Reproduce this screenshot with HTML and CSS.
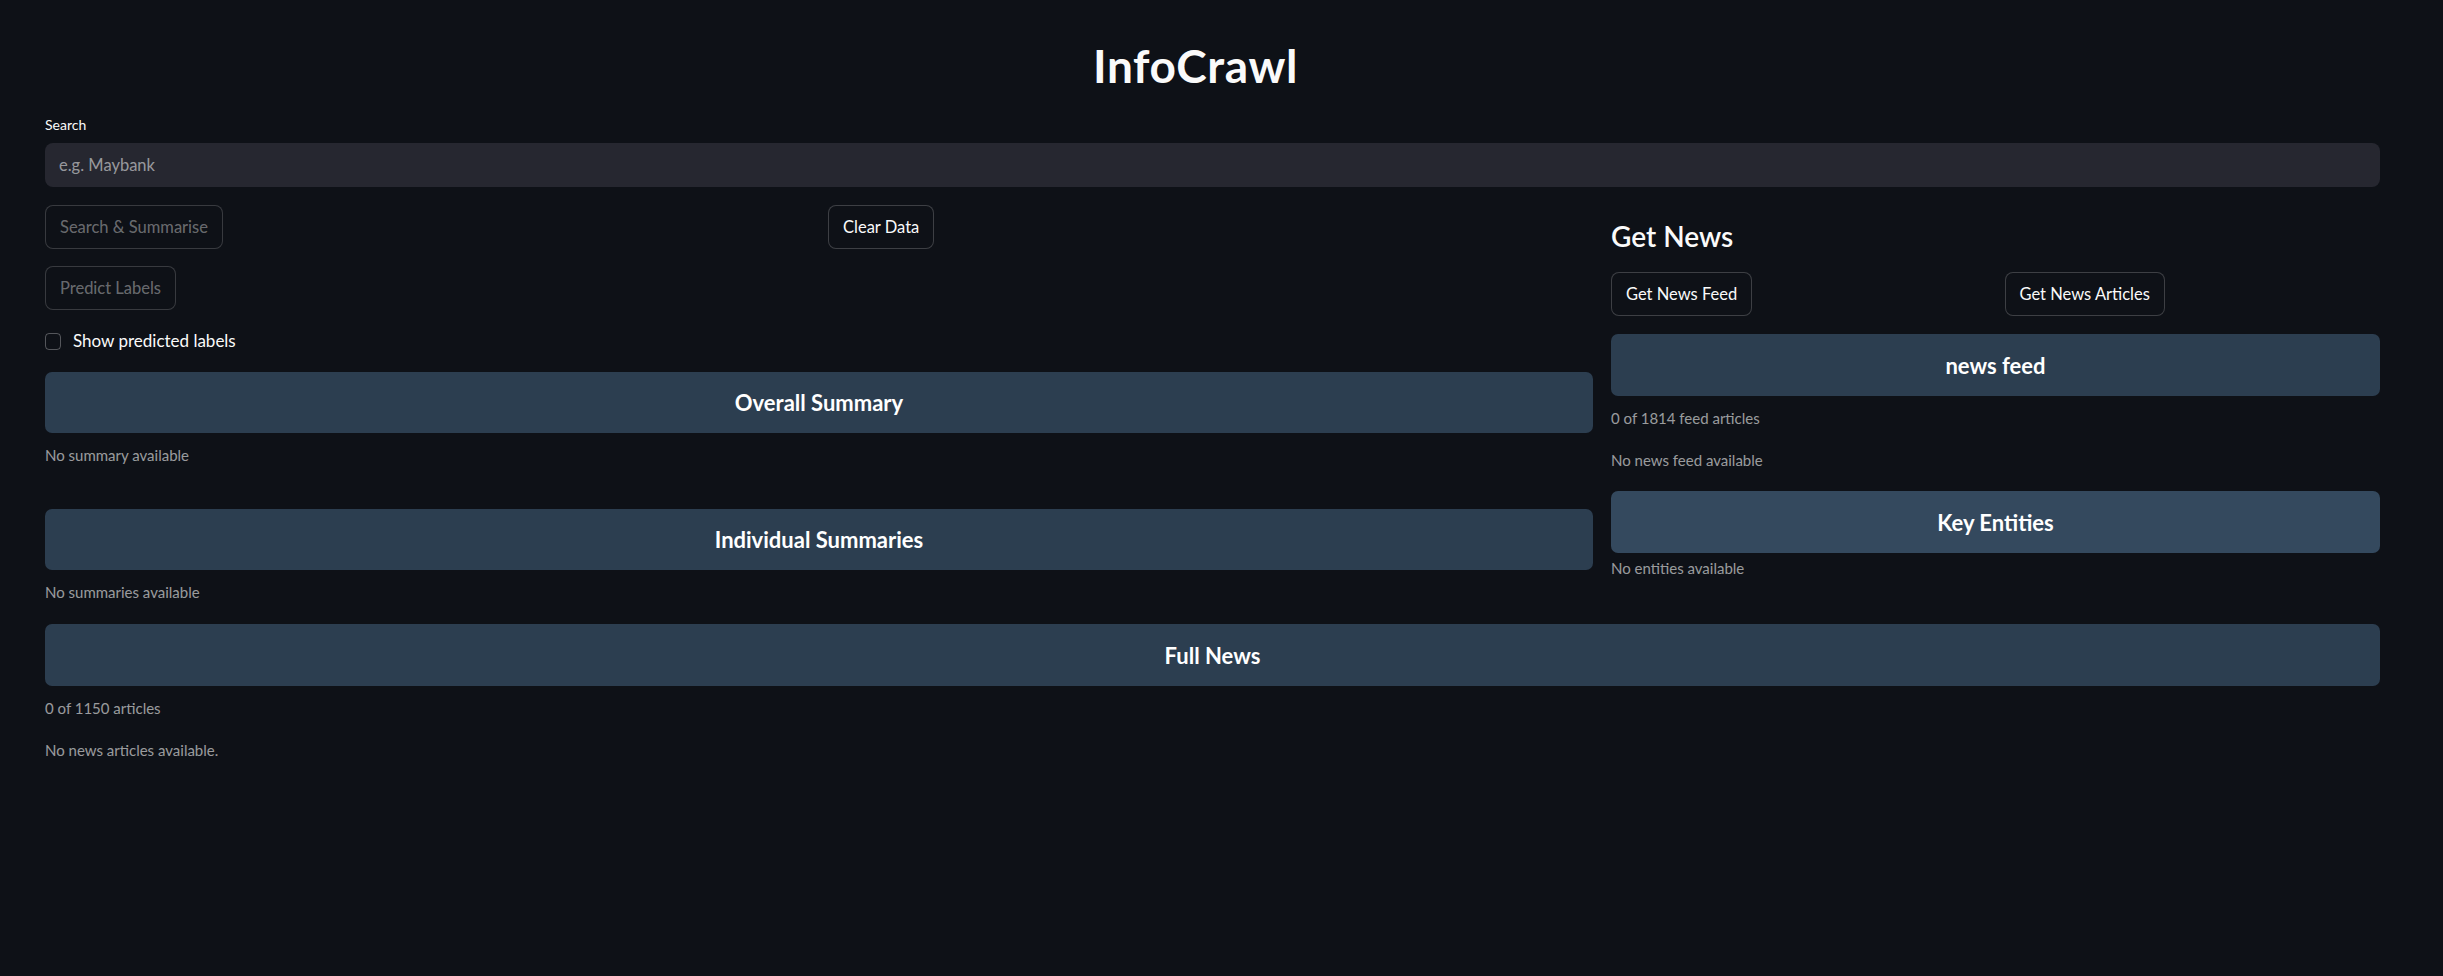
FILE: index.html
```html
<!DOCTYPE html>
<html lang="en">
<head>
<meta charset="utf-8">
<title>InfoCrawl</title>
<link rel="stylesheet" href="styles.css">
</head>
<body>
<main class="app">
  <h1 class="title">InfoCrawl</h1>

  <label class="field-label" for="q">Search</label>
  <input class="search-input" id="q" type="text" placeholder="e.g. Maybank">

  <div class="columns">
    <section class="col-left">
      <div class="btn-row">
        <div><button class="btn btn-disabled" disabled>Search &amp; Summarise</button></div>
        <div><button class="btn">Clear Data</button></div>
      </div>
      <div class="predict-row"><button class="btn btn-disabled" disabled>Predict Labels</button></div>
      <label class="check-row"><span class="check-box"></span><span>Show predicted labels</span></label>

      <div class="panel panel-dark panel-first">Overall Summary</div>
      <p class="muted">No summary available</p>

      <div class="panel panel-dark panel-second">Individual Summaries</div>
      <p class="muted">No summaries available</p>
    </section>

    <section class="col-right">
      <h3 class="subhead">Get News</h3>
      <div class="btn-row btn-row-right">
        <div><button class="btn">Get News Feed</button></div>
        <div><button class="btn">Get News Articles</button></div>
      </div>
      <div class="panel panel-dark panel-feed">news feed</div>
      <p class="muted">0 of 1814 feed articles</p>
      <p class="muted muted-gap">No news feed available</p>
      <div class="panel panel-light panel-entities">Key Entities</div>
      <p class="muted muted-tight">No entities available</p>
    </section>
  </div>

  <div class="panel panel-dark panel-full">Full News</div>
  <p class="muted">0 of 1150 articles</p>
  <p class="muted muted-gap">No news articles available.</p>
</main>
</body>
</html>
```

FILE: styles.css
```css
* { box-sizing: border-box; }

html, body {
  margin: 0;
  background: #0e1117;
  color: #fafafa;
  font-family: Lato, "Source Sans Pro", "Noto Sans", sans-serif;
}

.app {
  padding: 0 63px 0 45px;
  display: flex;
  flex-direction: column;
}

.title {
  margin: 0;
  padding: 40px 34px 0 0;
  text-align: center;
  font-size: 46px;
  letter-spacing: 0.6px;
  line-height: 52px;
  font-weight: 700;
}

.field-label {
  display: block;
  margin-top: 24px;
  font-size: 14px;
  line-height: 18px;
  color: #fafafa;
}

.search-input {
  margin-top: 9px;
  width: 100%;
  height: 44px;
  border: none;
  border-radius: 8px;
  background: #262730;
  color: #fafafa;
  padding: 0 14px;
  font-family: inherit;
  font-size: 16.5px;
  outline: none;
}
.search-input::placeholder { color: rgba(250, 250, 250, 0.55); }

.columns {
  margin-top: 18px;
  display: grid;
  grid-template-columns: 1548fr 769fr;
  column-gap: 18px;
  align-items: start;
}

.col-left, .col-right {
  display: flex;
  flex-direction: column;
  min-width: 0;
}

.btn-row {
  display: grid;
  grid-template-columns: 1fr 1fr;
  column-gap: 18px;
}

.btn {
  height: 44px;
  padding: 0 14px;
  border: 1px solid rgba(250, 250, 250, 0.2);
  border-radius: 8px;
  background: #0e1117;
  color: #fafafa;
  font-family: inherit;
  font-size: 16.5px;
  cursor: pointer;
}
.btn-disabled {
  color: rgba(250, 250, 250, 0.4);
  border-color: rgba(250, 250, 250, 0.18);
  cursor: not-allowed;
}

.predict-row { margin-top: 17px; }

.check-row {
  margin-top: 22px;
  display: flex;
  align-items: center;
  gap: 12px;
  font-size: 17px;
  line-height: 18px;
}
.check-box {
  width: 16px;
  height: 17px;
  border: 1px solid rgba(250, 250, 250, 0.3);
  border-radius: 4px;
}

.panel {
  height: 61px;
  border-radius: 7px;
  display: flex;
  align-items: center;
  justify-content: center;
  font-size: 22px;
  font-weight: 700;
  color: #ffffff;
}
.panel-dark { background: #2c3e50; }
.panel-light { background: #34495e; }

.panel-first { margin-top: 22px; }
.panel-second { margin-top: 43px; }
.panel-feed { margin-top: 18px; height: 62px; }
.panel-entities { margin-top: 20px; height: 62px; }
.panel-full { margin-top: 21px; height: 62px; }

.muted {
  margin: 12px 0 0;
  font-size: 15px;
  line-height: 21px;
  color: rgba(250, 250, 250, 0.6);
}
.muted-gap { margin-top: 21px; }
.muted-tight { margin-top: 5px; }

.subhead {
  margin: 14px 0 0;
  font-size: 28px;
  line-height: 34px;
  font-weight: 600;
}
.btn-row-right { margin-top: 19px; }
```
